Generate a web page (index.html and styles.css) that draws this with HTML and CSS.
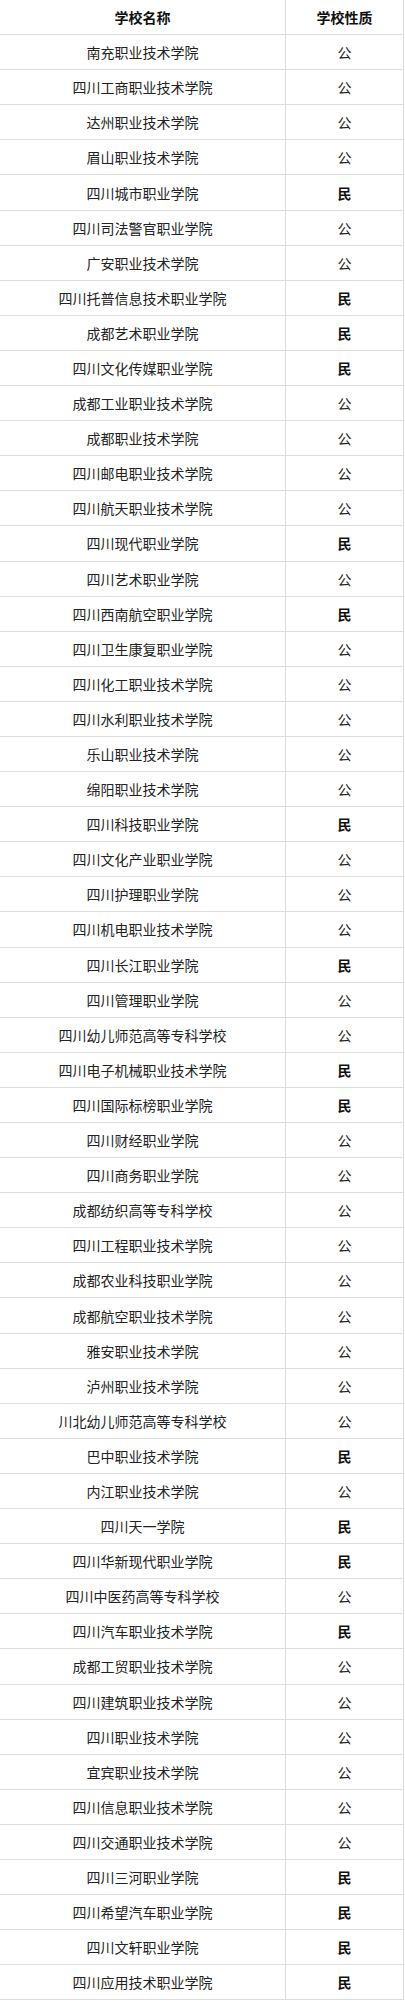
FILE: index.html
```html
<!DOCTYPE html>
<html lang="zh-CN">
<head>
<meta charset="utf-8">
<title>四川高职院校</title>
<link rel="stylesheet" href="styles.css">
</head>
<body>
<table class="schools">
<thead>
<tr><th class="name">学校名称</th><th class="type">学校性质</th></tr>
</thead>
<tbody>
<tr><td>南充职业技术学院</td><td>公</td></tr>
<tr><td>四川工商职业技术学院</td><td>公</td></tr>
<tr><td>达州职业技术学院</td><td>公</td></tr>
<tr><td>眉山职业技术学院</td><td>公</td></tr>
<tr><td>四川城市职业学院</td><td class="min">民</td></tr>
<tr><td>四川司法警官职业学院</td><td>公</td></tr>
<tr><td>广安职业技术学院</td><td>公</td></tr>
<tr><td>四川托普信息技术职业学院</td><td class="min">民</td></tr>
<tr><td>成都艺术职业学院</td><td class="min">民</td></tr>
<tr><td>四川文化传媒职业学院</td><td class="min">民</td></tr>
<tr><td>成都工业职业技术学院</td><td>公</td></tr>
<tr><td>成都职业技术学院</td><td>公</td></tr>
<tr><td>四川邮电职业技术学院</td><td>公</td></tr>
<tr><td>四川航天职业技术学院</td><td>公</td></tr>
<tr><td>四川现代职业学院</td><td class="min">民</td></tr>
<tr><td>四川艺术职业学院</td><td>公</td></tr>
<tr><td>四川西南航空职业学院</td><td class="min">民</td></tr>
<tr><td>四川卫生康复职业学院</td><td>公</td></tr>
<tr><td>四川化工职业技术学院</td><td>公</td></tr>
<tr><td>四川水利职业技术学院</td><td>公</td></tr>
<tr><td>乐山职业技术学院</td><td>公</td></tr>
<tr><td>绵阳职业技术学院</td><td>公</td></tr>
<tr><td>四川科技职业学院</td><td class="min">民</td></tr>
<tr><td>四川文化产业职业学院</td><td>公</td></tr>
<tr><td>四川护理职业学院</td><td>公</td></tr>
<tr><td>四川机电职业技术学院</td><td>公</td></tr>
<tr><td>四川长江职业学院</td><td class="min">民</td></tr>
<tr><td>四川管理职业学院</td><td>公</td></tr>
<tr><td>四川幼儿师范高等专科学校</td><td>公</td></tr>
<tr><td>四川电子机械职业技术学院</td><td class="min">民</td></tr>
<tr><td>四川国际标榜职业学院</td><td class="min">民</td></tr>
<tr><td>四川财经职业学院</td><td>公</td></tr>
<tr><td>四川商务职业学院</td><td>公</td></tr>
<tr><td>成都纺织高等专科学校</td><td>公</td></tr>
<tr><td>四川工程职业技术学院</td><td>公</td></tr>
<tr><td>成都农业科技职业学院</td><td>公</td></tr>
<tr><td>成都航空职业技术学院</td><td>公</td></tr>
<tr><td>雅安职业技术学院</td><td>公</td></tr>
<tr><td>泸州职业技术学院</td><td>公</td></tr>
<tr><td>川北幼儿师范高等专科学校</td><td>公</td></tr>
<tr><td>巴中职业技术学院</td><td class="min">民</td></tr>
<tr><td>内江职业技术学院</td><td>公</td></tr>
<tr><td>四川天一学院</td><td class="min">民</td></tr>
<tr><td>四川华新现代职业学院</td><td class="min">民</td></tr>
<tr><td>四川中医药高等专科学校</td><td>公</td></tr>
<tr><td>四川汽车职业技术学院</td><td class="min">民</td></tr>
<tr><td>成都工贸职业技术学院</td><td>公</td></tr>
<tr><td>四川建筑职业技术学院</td><td>公</td></tr>
<tr><td>四川职业技术学院</td><td>公</td></tr>
<tr><td>宜宾职业技术学院</td><td>公</td></tr>
<tr><td>四川信息职业技术学院</td><td>公</td></tr>
<tr><td>四川交通职业技术学院</td><td>公</td></tr>
<tr><td>四川三河职业学院</td><td class="min">民</td></tr>
<tr><td>四川希望汽车职业学院</td><td class="min">民</td></tr>
<tr><td>四川文轩职业学院</td><td class="min">民</td></tr>
<tr><td>四川应用技术职业学院</td><td class="min">民</td></tr>
</tbody>
</table>
</body>
</html>
```

FILE: styles.css
```css
html, body {
  margin: 0;
  padding: 0;
  background: #ffffff;
}

body {
  font-family: "Noto Sans CJK SC", "Noto Sans", sans-serif;
  color: #222222;
  font-size: 14px;
}

.schools {
  border-collapse: collapse;
  width: 405px;
  margin: -1px 0 0 -1px;
  table-layout: fixed;
}

.schools th,
.schools td {
  border: 1px solid #dddddd;
  text-align: center;
  vertical-align: middle;
  padding: 0;
  height: 34.1px;
  line-height: 20px;
  font-size: 14px;
  font-weight: 400;
}

.schools th {
  font-weight: 700;
  color: #111111;
}

.schools .name {
  width: 285px;
}

.schools .min {
  font-weight: 700;
  color: #111111;
}
```
